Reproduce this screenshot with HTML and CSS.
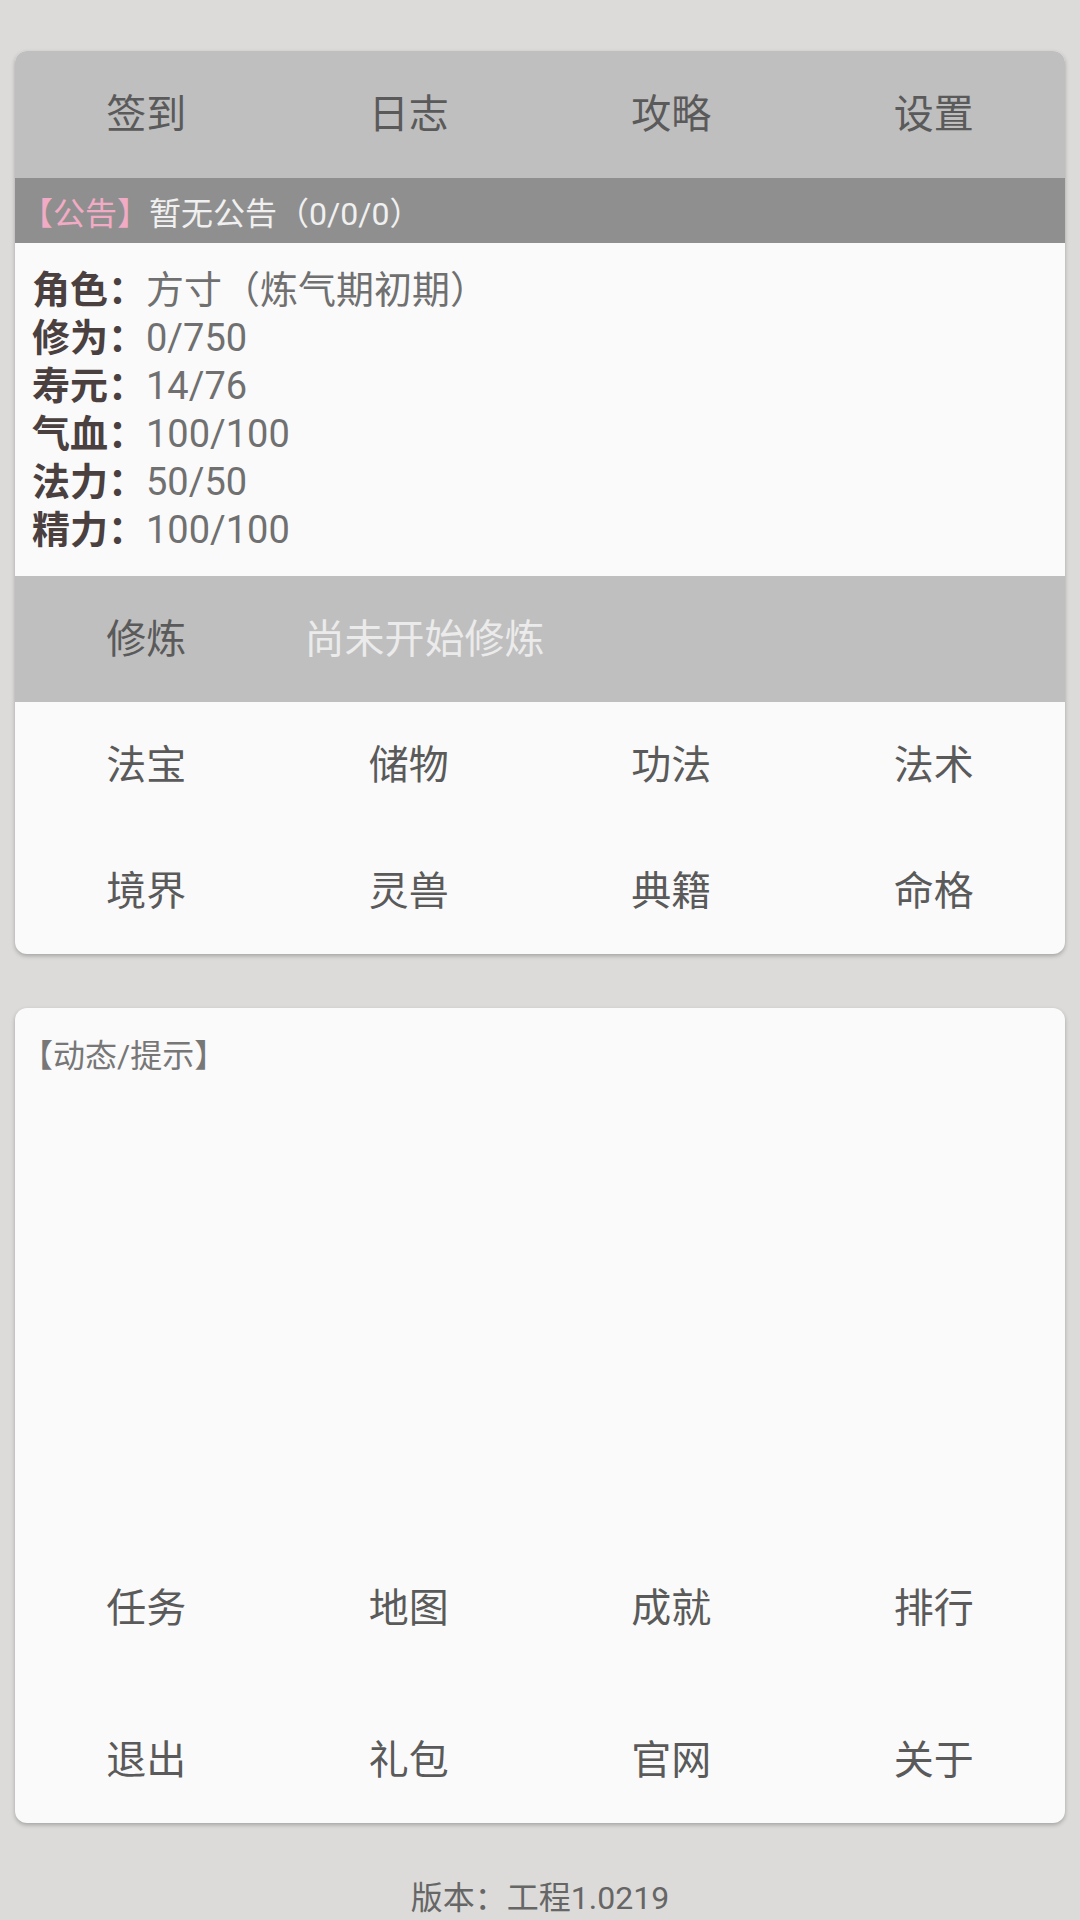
FILE: index.html
```html
<!DOCTYPE html>
<html lang="zh-CN">
<head>
  <meta charset="UTF-8">
  <title>修仙</title>
  <link rel="stylesheet" href="styles.css">
</head>
<body>

<div class="page">
  <div class="card main-card">
    <div class="menu-bar">
      <div class="cell">签到</div>
      <div class="cell">日志</div>
      <div class="cell">攻略</div>
      <div class="cell">设置</div>
    </div>

    <div class="notice">
      <span class="tag">【公告】</span><span>暂无公告（0/0/0）</span>
    </div>

    <div class="stats">
      <div class="row"><span class="label">角色：</span><span class="value">方寸（炼气期初期）</span></div>
      <div class="row"><span class="label">修为：</span><span class="value">0/750</span></div>
      <div class="row"><span class="label">寿元：</span><span class="value">14/76</span></div>
      <div class="row"><span class="label">气血：</span><span class="value">100/100</span></div>
      <div class="row"><span class="label">法力：</span><span class="value">50/50</span></div>
      <div class="row"><span class="label">精力：</span><span class="value">100/100</span></div>
    </div>

    <div class="train">
      <div class="train-label">修炼</div>
      <div class="train-status">尚未开始修炼</div>
    </div>

    <div class="grid">
      <div class="cell">法宝</div>
      <div class="cell">储物</div>
      <div class="cell">功法</div>
      <div class="cell">法术</div>
      <div class="cell">境界</div>
      <div class="cell">灵兽</div>
      <div class="cell">典籍</div>
      <div class="cell">命格</div>
    </div>
  </div>

  <div class="card log-card">
    <div class="log-title">【动态/提示】</div>
    <div class="log-body"></div>
    <div class="grid bottom-grid">
      <div class="cell">任务</div>
      <div class="cell">地图</div>
      <div class="cell">成就</div>
      <div class="cell">排行</div>
      <div class="cell">退出</div>
      <div class="cell">礼包</div>
      <div class="cell">官网</div>
      <div class="cell">关于</div>
    </div>
  </div>

  <div class="version">版本：工程1.0219</div>
</div>

</body>
</html>
```

FILE: styles.css
```css
body {
  margin: 0;
  background: #dcdbd9;
  font-family: Roboto, "Noto Sans CJK SC", sans-serif;
  color: #5a5a5a;
}
.page {
  padding: 51px 15px 0;
}
.card {
  background: #fafafa;
  border-radius: 12px;
  overflow: hidden;
  box-shadow: 0 2px 4px rgba(0,0,0,0.25);
}
.menu-bar, .grid {
  display: grid;
  grid-template-columns: repeat(4, 1fr);
  font-size: 40px;
}
.menu-bar {
  height: 127px;
  background: #bfbfbf;
}
.cell {
  display: flex; align-items: center; justify-content: center;
  padding-bottom: 7px;
}
.notice {
  height: 65px;
  background: #8f8f8f;
  display: flex; align-items: center;
  padding-left: 6px;
  font-size: 32px;
  color: #f0f0f0;
}
.notice .tag {
  color: #f2abc5;
}
.stats {
  padding: 23px 17px 22px;
  font-size: 38px;
  line-height: 48px;
}
.stats .label {
  font-weight: bold; color: #4a4040;
}
.stats .value {
  color: #707070;
}
.train {
  height: 126px;
  box-sizing: border-box;
  padding-bottom: 7px;
  background: #bfbfbf;
  display: flex; align-items: center;
  font-size: 40px;
}
.train-label {
  width: 25%; text-align: center;
}
.train-status {
  padding-left: 27px;
  color: #ebebeb;
}
.grid {
  grid-auto-rows: 126px;
}
.log-card {
  margin-top: 54px;
  height: 815px;
  display: flex; flex-direction: column;
}
.log-title {
  padding: 28px 0 0 6px;
  font-size: 32px; line-height: 40px;
  color: #777;
}
.log-body {
  flex: 1;
}
.bottom-grid {
  row-gap: 26px;
}
.version {
  margin-top: 55px;
  text-align: center;
  font-size: 32px; line-height: 40px;
  color: #666;
}
```
